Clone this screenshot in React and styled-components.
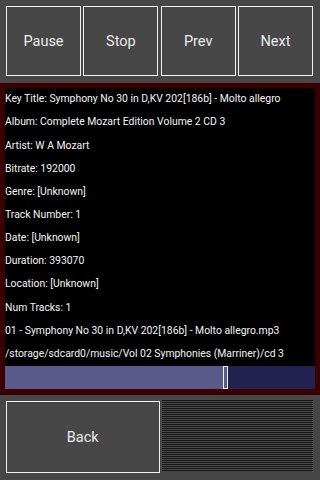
import React from "react";
import styled, { createGlobalStyle } from "styled-components";

const Global = createGlobalStyle`
  html, body { margin: 0; padding: 0; background: #474747; }
  body { width: 320px; height: 480px; overflow: hidden; font-family: Roboto, "Liberation Sans", sans-serif; }
`;

const Screen = styled.div`
  width: 320px;
  height: 480px;
  display: flex;
  flex-direction: column;
  background: #474747;
`;

const TopBar = styled.div`
  height: 83px;
  box-sizing: border-box;
  padding: 6px 7px 7px 6px;
  display: flex;
  gap: 2.33px;
`;

const Button = styled.div`
  flex: 1;
  box-sizing: border-box;
  border: 1px solid #f2f2f2;
  background: #474747;
  color: #ececec;
  font-size: 14.5px;
  padding-top: 1px;
  display: flex;
  align-items: center;
  justify-content: center;
`;

const Panel = styled.div`
  height: 312px;
  box-sizing: border-box;
  background: #3a0000;
  padding: 5px 5px 6px 5px;
  display: flex;
  flex-direction: column;
`;

const Info = styled.div`
  flex: 1;
  background: #000;
  display: flex;
  flex-direction: column;
`;

const Line = styled.div`
  height: 23.17px;
  box-sizing: border-box;
  padding-top: 5.2px;
  line-height: 12px;
  font-size: 10.4px;
  color: #f4f4f4;
  white-space: nowrap;
  overflow: hidden;
`;

const Bar = styled.div`
  height: 23px;
  background: #22224e;
  position: relative;
  display: flex;
`;

const Fill = styled.div`
  background: #5a5a8a;
  height: 100%;
`;

const Thumb = styled.div`
  position: absolute;
  top: 0;
  bottom: 0;
  width: 5px;
  box-sizing: border-box;
  border: 1px solid #f0f0f0;
  background: #5a5a8a;
`;

const BottomBar = styled.div`
  flex: 1;
  box-sizing: border-box;
  padding: 6px 7px 7px 6px;
  display: flex;
  gap: 2px;
`;

const Stripes = styled.div`
  flex: 1;
  margin: -1px 0 2px 0;
  background: repeating-linear-gradient(
    to bottom,
    #161616 0px,
    #161616 1px,
    #4a4a4a 1px,
    #4a4a4a 2px
  );
`;

const lines = [
  "Key Title: Symphony No 30 in D,KV 202[186b] - Molto allegro",
  "Album: Complete Mozart Edition Volume 2 CD 3",
  "Artist: W A Mozart",
  "Bitrate: 192000",
  "Genre: [Unknown]",
  "Track Number: 1",
  "Date: [Unknown]",
  "Duration: 393070",
  "Location: [Unknown]",
  "Num Tracks: 1",
  "01 - Symphony No 30 in D,KV 202[186b] - Molto allegro.mp3",
  "/storage/sdcard0/music/Vol 02 Symphonies (Marriner)/cd 3",
];

export default function App() {
  const progress = 219 / 310;
  return (
    <Screen>
      <Global />
      <TopBar>
        <Button>Pause</Button>
        <Button>Stop</Button>
        <Button>Prev</Button>
        <Button>Next</Button>
      </TopBar>
      <Panel>
        <Info>
          {lines.map((l) => (
            <Line key={l}>{l}</Line>
          ))}
        </Info>
        <Bar>
          <Fill style={{ width: `${progress * 100}%` }} />
          <Thumb style={{ left: `calc(${progress * 100}% - 1px)` }} />
        </Bar>
      </Panel>
      <BottomBar>
        <Button>Back</Button>
        <Stripes />
      </BottomBar>
    </Screen>
  );
}
